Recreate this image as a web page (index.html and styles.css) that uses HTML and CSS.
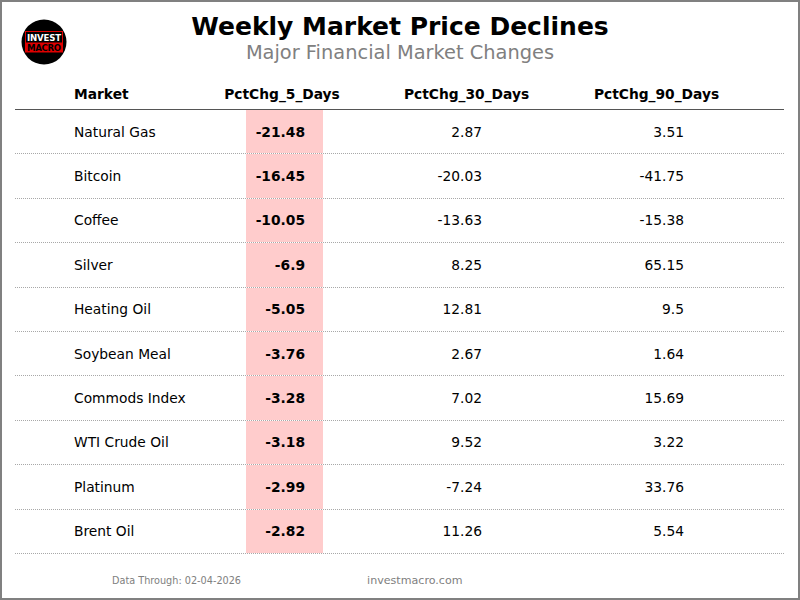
FILE: index.html
```html
<!DOCTYPE html>
<html>
<head>
<meta charset="utf-8">
<link rel="stylesheet" href="styles.css">
</head>
<body>
<div class="page">
  <header class="top">
    <div class="logo">
      <svg width="46" height="46" viewBox="0 0 46 46">
        <circle cx="23" cy="23" r="22.5" fill="#000"/>
        <rect x="4.5" y="12.5" width="37" height="20.5" fill="none" stroke="#e00000" stroke-width="1"/>
        <rect x="4.5" y="23.5" width="37" height="9.5" fill="#e00000"/>
        <text x="23" y="21.5" text-anchor="middle" textLength="34" class="logo-t1">INVEST</text>
        <text x="23" y="31.5" text-anchor="middle" textLength="34" class="logo-t2">MACRO</text>
      </svg>
    </div>
    <div class="titles">
      <h1 class="title">Weekly Market Price Declines</h1>
      <div class="subtitle">Major Financial Market Changes</div>
    </div>
    <div></div>
  </header>

  <div class="table">
    <div class="row head">
      <div class="c c1">Market</div>
      <div class="c h2">PctChg_5_Days</div>
      <div class="c h3">PctChg_30_Days</div>
      <div class="c h4">PctChg_90_Days</div>
    </div>
    <div class="row"><div class="c c1">Natural Gas</div><div class="c c2">-21.48</div><div class="c c3">2.87</div><div class="c c4">3.51</div></div>
    <div class="row"><div class="c c1">Bitcoin</div><div class="c c2">-16.45</div><div class="c c3">-20.03</div><div class="c c4">-41.75</div></div>
    <div class="row"><div class="c c1">Coffee</div><div class="c c2">-10.05</div><div class="c c3">-13.63</div><div class="c c4">-15.38</div></div>
    <div class="row"><div class="c c1">Silver</div><div class="c c2">-6.9</div><div class="c c3">8.25</div><div class="c c4">65.15</div></div>
    <div class="row"><div class="c c1">Heating Oil</div><div class="c c2">-5.05</div><div class="c c3">12.81</div><div class="c c4">9.5</div></div>
    <div class="row"><div class="c c1">Soybean Meal</div><div class="c c2">-3.76</div><div class="c c3">2.67</div><div class="c c4">1.64</div></div>
    <div class="row"><div class="c c1">Commods Index</div><div class="c c2">-3.28</div><div class="c c3">7.02</div><div class="c c4">15.69</div></div>
    <div class="row"><div class="c c1">WTI Crude Oil</div><div class="c c2">-3.18</div><div class="c c3">9.52</div><div class="c c4">3.22</div></div>
    <div class="row"><div class="c c1">Platinum</div><div class="c c2">-2.99</div><div class="c c3">-7.24</div><div class="c c4">33.76</div></div>
    <div class="row"><div class="c c1">Brent Oil</div><div class="c c2">-2.82</div><div class="c c3">11.26</div><div class="c c4">5.54</div></div>
  </div>

  <footer class="foot">
    <span class="date">Data Through: 02-04-2026</span>
    <span class="site">investmacro.com</span>
  </footer>
</div>
</body>
</html>
```

FILE: styles.css
```css
* { box-sizing: border-box; }
html, body { margin: 0; padding: 0; background: #fff; }
body { font-family: "DejaVu Sans", sans-serif; color: #000; }

.page {
  width: 800px;
  height: 600px;
  border: 2px solid #808080;
  overflow: hidden;
}

.top {
  display: grid;
  grid-template-columns: 1fr auto 1fr;
  align-items: start;
  padding-top: 11px;
}
.logo { padding-left: 19px; padding-top: 6px; line-height: 0; }
.logo-t1 { font-family: "DejaVu Sans", sans-serif; font-weight: bold; font-size: 8.6px; fill: #fff; }
.logo-t2 { font-family: "DejaVu Sans", sans-serif; font-weight: bold; font-size: 8.6px; fill: #000; }

.titles { text-align: center; }
.title {
  margin: 0;
  font-size: 25px;
  line-height: 28px;
  font-weight: bold;
}
.subtitle {
  font-size: 19.4px;
  line-height: 24px;
  color: #808080;
}

.table {
  margin: 13px 0 0 13px;
  width: 769px;
}
.row {
  display: grid;
  grid-template-columns: 231px 77px 177px 284px;
  height: 44.4px;
  border-bottom: 1px dotted #a8a8a8;
  font-size: 13.8px;
}
.row.head {
  height: 32px;
  border-bottom: 1px solid #555;
  font-weight: bold;
}
.c {
  display: flex;
  align-items: center;
  white-space: nowrap;
}
.c1 { padding-left: 59px; }
.c2 { justify-content: flex-end; padding-right: 18px; background: #ffcccc; font-weight: bold; }
.c3 { justify-content: flex-end; padding-right: 18px; }
.c4 { justify-content: flex-end; padding-right: 100px; }
.h2 { justify-content: center; padding-right: 5px; }
.h3 { justify-content: center; padding-left: 110px; }
.h4 { justify-content: center; padding-left: 29px; }

.foot {
  display: flex;
  align-items: center;
  margin-top: 19px;
  height: 16px;
  color: #808080;
}
.date { font-size: 9.7px; margin-left: 110px; }
.site { font-size: 11.1px; margin-left: 126px; }
```
